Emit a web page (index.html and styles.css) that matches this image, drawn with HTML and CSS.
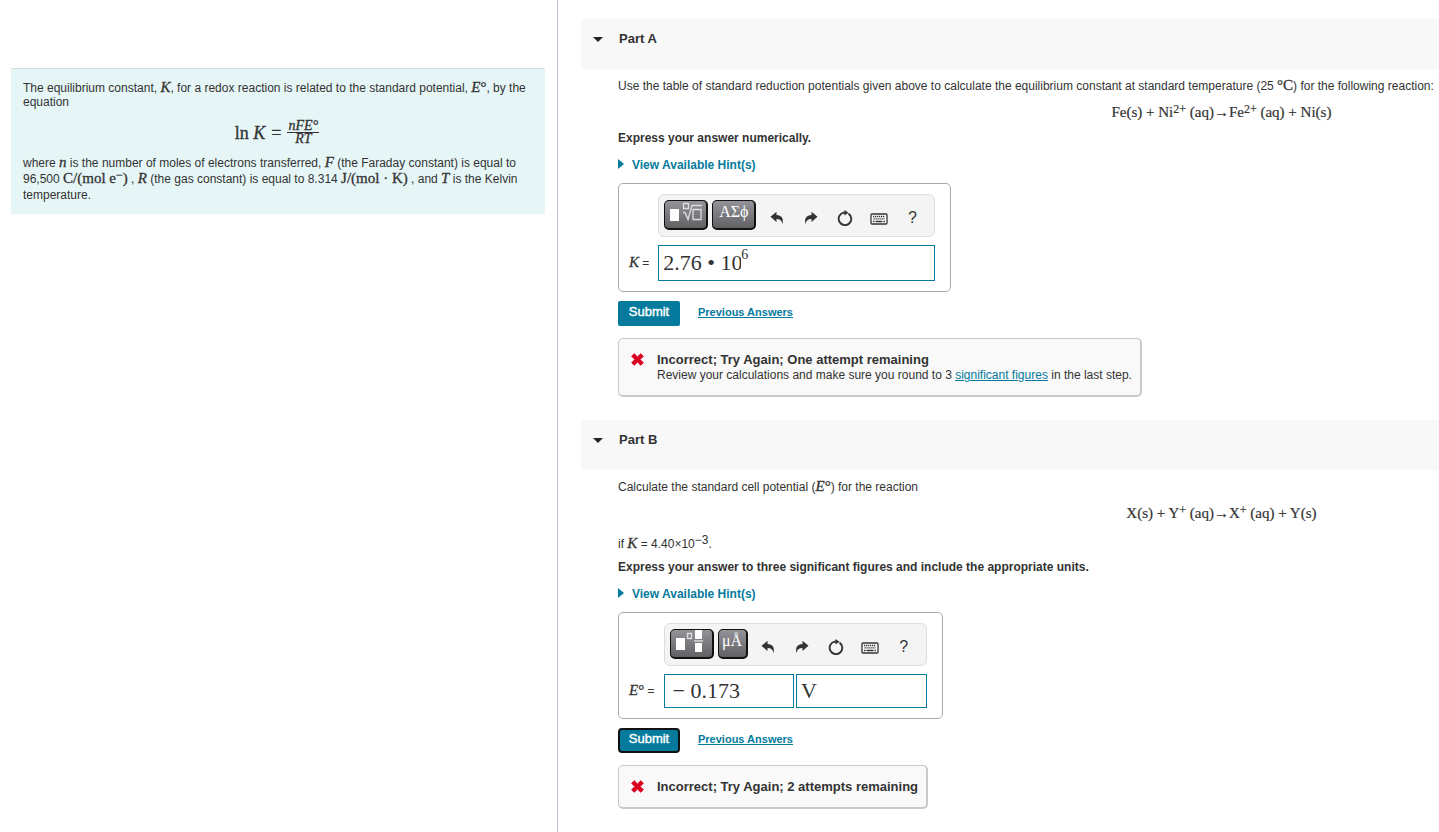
FILE: index.html
```html
<!DOCTYPE html>
<html lang="en">
<head>
<meta charset="utf-8">
<title>Equilibrium constant and cell potential</title>
<link rel="stylesheet" href="styles.css">
</head>
<body>
<svg class="defs" aria-hidden="true">
  <symbol id="undo" viewBox="0 0 16 16"><path d="M1.500 6.800 7.500 1.800v3.100c5 .2 7.600 3.300 5.800 9.300-.3-3.600-2.200-5.200-5.800-5.200v3z"/></symbol>
  <symbol id="redo" viewBox="0 0 16 16"><path d="M14.500 6.800 8.500 1.800v3.100c-5 .2-7.600 3.300-5.800 9.300.3-3.600 2.200-5.200 5.800-5.200v3z"/></symbol>
  <symbol id="reset" viewBox="0 0 16 16"><path d="M11.500 3.600a6.300 6.300 0 1 1-5-.9H9" fill="none" stroke="currentColor" stroke-width="1.900"/><path d="M7.500 0v5.400L11.500 2.700z"/></symbol>
  <symbol id="keyboard" viewBox="0 0 18 12"><rect x="1" y="1" width="16" height="10" rx="1" fill="#fff" stroke="currentColor" stroke-width="1.300"/><path d="M3 3.500h12M3.500 5.800h11" stroke="currentColor" stroke-width="1.300" stroke-dasharray="1.300 .7"/><path d="M3 8.500h1.500M5.500 8.500h7M13.500 8.500H15" stroke="currentColor" stroke-width="1.300"/></symbol>
  <symbol id="cross" viewBox="0 0 14 14"><path d="M3.500.8 7 4.200 10.500.8l2.800 2.700L9.800 7l3.500 3.500-2.800 2.700L7 9.800l-3.500 3.400-2.800-2.700L4.200 7 .7 3.500z" stroke="currentColor" stroke-linejoin="round"/></symbol>
</svg>
<div class="page">
  <aside class="side">
    <section class="intro">
      <p>The equilibrium constant, <i class="math">K</i>, for a redox reaction is related to the standard potential, <i class="math">E</i><span class="math">°</span>, by the equation</p>
      <div class="formula math">
        <span>ln <i>K</i></span><span>=</span>
        <span class="fraction"><i class="numerator">nFE°</i><i>RT</i></span>
      </div>
      <p class="where">where <i class="math">n</i> is the number of moles of electrons transferred, <i class="math">F</i> (the Faraday constant) is equal to 96,500 <span class="math">C/(mol e<sup>−</sup>)</span> , <i class="math">R</i> (the gas constant) is equal to 8.314 <span class="math">J/(mol · K)</span> , and <i class="math">T</i> is the Kelvin temperature.</p>
    </section>
  </aside>
  <main class="main">
    <section class="part">
      <header class="part-head"><span class="caret"></span><h2>Part A</h2></header>
      <div class="part-body">
        <p class="question">Use the table of standard reduction potentials given above to calculate the equilibrium constant at standard temperature (25 <span class="math">°C</span>) for the following reaction:</p>
        <div class="reaction math">Fe(s) + Ni<sup>2+</sup> (aq)→Fe<sup>2+</sup> (aq) + Ni(s)</div>
        <p class="instruct">Express your answer numerically.</p>
        <a class="hint" href="#hint-a"><span class="arrow"></span>View Available Hint(s)</a>
        <form class="answer answer-a">
          <div class="toolbar">
            <button type="button" class="key wide" aria-label="Templates"><svg width="34" height="22" viewBox="0 0 34 22"><path d="M1 8h9v12H1z" fill="#fff"/><path d="M14.500 2.500h5v5h-5zM14 11.500h2l3 7 4-14h10M24 8.500h8v10h-8z" fill="none" stroke="#ddd" stroke-width="1.300"/></svg></button>
            <button type="button" class="key wide">ΑΣϕ</button>
            <button type="button" class="tool" aria-label="Undo"><svg class="icon"><use href="#undo"/></svg></button>
            <button type="button" class="tool" aria-label="Redo"><svg class="icon"><use href="#redo"/></svg></button>
            <button type="button" class="tool" aria-label="Reset"><svg class="icon"><use href="#reset"/></svg></button>
            <button type="button" class="tool" aria-label="Keyboard"><svg class="icon keyboard"><use href="#keyboard"/></svg></button>
            <button type="button" class="tool">?</button>
          </div>
          <label for="k"><i class="math">K</i> =</label>
          <div class="field"><input id="k" class="base" value="2.76 • 10"><input class="exponent" aria-label="Exponent" value="6"></div>
        </form>
        <div class="actions"><button type="button" class="submit">Submit</button><a class="previous" href="#previous-a">Previous Answers</a></div>
        <div class="feedback">
          <svg class="cross"><use href="#cross"/></svg>
          <div><strong>Incorrect; Try Again; One attempt remaining</strong>
          <p>Review your calculations and make sure you round to 3 <a href="#figures">significant figures</a> in the last step.</p></div>
        </div>
      </div>
    </section>
    <section class="part">
      <header class="part-head"><span class="caret"></span><h2>Part B</h2></header>
      <div class="part-body">
        <p class="question">Calculate the standard cell potential (<i class="math">E</i><span class="math">°</span>) for the reaction</p>
        <div class="reaction math">X(s) + Y<sup>+</sup> (aq)→X<sup>+</sup> (aq) + Y(s)</div>
        <p class="condition">if <i class="math">K</i> = 4.40×10<sup>−3</sup>.</p>
        <p class="instruct">Express your answer to three significant figures and include the appropriate units.</p>
        <a class="hint" href="#hint-b"><span class="arrow"></span>View Available Hint(s)</a>
        <form class="answer answer-b">
          <div class="toolbar">
            <button type="button" class="key wide" aria-label="Templates"><svg width="34" height="24" viewBox="0 0 34 24"><path d="M2 9h9v12H2zM21 1h7v9h-7zM21 14h7v9h-7z" fill="#fff"/><path d="M13.500 4.500h4v5h-4zM20 12h9" fill="none" stroke="#ddd" stroke-width="1.300"/></svg></button>
            <button type="button" class="key">μÅ</button>
            <button type="button" class="tool" aria-label="Undo"><svg class="icon"><use href="#undo"/></svg></button>
            <button type="button" class="tool" aria-label="Redo"><svg class="icon"><use href="#redo"/></svg></button>
            <button type="button" class="tool" aria-label="Reset"><svg class="icon"><use href="#reset"/></svg></button>
            <button type="button" class="tool" aria-label="Keyboard"><svg class="icon keyboard"><use href="#keyboard"/></svg></button>
            <button type="button" class="tool">?</button>
          </div>
          <label for="e"><i class="math">E</i><span class="math">°</span> =</label>
          <div class="pair"><input id="e" class="field signed" value="− 0.173"><input class="field" aria-label="Units" value="V"></div>
        </form>
        <div class="actions"><button type="button" class="submit focused">Submit</button><a class="previous" href="#previous-b">Previous Answers</a></div>
        <div class="feedback">
          <svg class="cross"><use href="#cross"/></svg>
          <strong>Incorrect; Try Again; 2 attempts remaining</strong>
        </div>
      </div>
    </section>
  </main>
</div>
</body>
</html>
```
FILE: styles.css
```css
* { box-sizing: border-box; }
body { margin: 0; background: #fff; color: #333; font: 12px/16px "Liberation Sans", Arial, sans-serif; }
p, h2 { margin: 0; }
button, input { font: inherit; color: inherit; margin: 0; }
a { color: #047a9c; }
svg { display: block; fill: currentColor; }
sup { font-size: 12px; line-height: 8px; vertical-align: 4px; }
.defs { position: absolute; width: 0; height: 0; }
.math { font-family: "Liberation Serif", serif; font-size: 15px; line-height: 12px; -webkit-text-stroke: 0.3px currentColor; }

.page { display: grid; grid-template-columns: 558fr 881fr; min-height: 100vh; }
.side { padding: 68px 12px 0 11px; border-right: 1px solid #b8c2d6; }
.intro { padding: 12px 14px 11px 12px; background: #e6f6f7; border-top: 1px solid #d5dcdd; line-height: 14px; }
.formula { display: flex; align-items: center; justify-content: center; gap: 6px; padding: 11px 0 10px; font-size: 18px; line-height: 24px; }
.fraction { display: flex; flex-direction: column; align-items: center; font-size: 14px; line-height: 12px; }
.numerator { padding: 0 1px; border-bottom: 1px solid #333; }
.where { line-height: 16px; }

.main { padding: 19px 0 22px 23px; }
.part + .part { margin-top: 23px; }
.part-head { display: flex; gap: 16px; height: 50px; padding: 11px 12px; background: #f8f8f8; }
.caret { height: 5px; margin-top: 7px; border: 5px solid transparent; border-top-color: #222; border-bottom: 0; }
h2 { font-size: 13px; line-height: 17px; }
.part-body { padding: 9px 0 0 37px; }
.question { white-space: nowrap; }
.reaction { margin-left: 47%; padding: 7px 0; font-size: 15px; line-height: 22px; text-align: center; -webkit-text-stroke: 0.2px currentColor; }
.condition { padding: 5px 0 7px; }
.instruct { font-weight: bold; }
.hint { display: flex; align-items: center; gap: 8px; width: max-content; margin-top: 11px; font-weight: bold; text-decoration: none; }
.arrow { margin-top: -3px; border: 5px solid transparent; border-left: 6px solid #047a9c; border-right: 0; }

.answer { display: grid; align-items: center; gap: 8px 9px; width: max-content; margin-top: 10px; padding: 10px 15px 10px 10px; border: 1px solid #aaa; border-radius: 5px; }
.answer-a { grid-template-columns: auto 277px; }
.answer-b { grid-template-columns: auto 263px; }
.toolbar { grid-column: 2; display: flex; height: 43px; padding: 5px; border: 1px solid #ddd; border-radius: 6px; background: #f4f4f4; }
.key { display: flex; align-items: center; justify-content: center; flex: none; width: 30px; height: 30px; margin-right: 4px; padding: 0 0 6px; border: 1px solid #111; border-width: 1px 2px 2px 1px; border-radius: 5px; background: linear-gradient(#929299, #626265); color: #fff; font: 16px/20px "Liberation Serif", serif; }
.wide { width: 44px; }
.tool { display: flex; align-items: center; justify-content: center; flex: 1; padding: 4px 0 0; border: 0; background: none; font-size: 16px; }
.icon { width: 16px; height: 16px; }
.keyboard { width: 18px; height: 12px; margin-top: 3px; }
.field { display: flex; min-width: 0; height: 36px; padding: 0 4px; border: 1px solid #047a9c; border-radius: 0; background: #fff; font: 22px/32px "Liberation Serif", serif; }
.pair { display: grid; grid-template-columns: 1fr 1fr; gap: 2px; }
.pair .field { height: 34px; }
.pair .signed { padding-left: 8px; }
.base, .exponent { padding: 0; border: 0; background: none; }
.base { width: 78px; }
.exponent { flex: 1; min-width: 0; height: 18px; font-size: 14px; }

.actions { display: flex; align-items: center; gap: 18px; margin-top: 9px; }
.submit { width: 62px; height: 25px; padding: 0 0 4px; border: 0; border-radius: 2px; background: #047a9c; color: #fff; font-size: 13px; -webkit-text-stroke: 0.4px #fff; }
.focused { border: 2px solid #111; border-radius: 4px; }
.previous { padding-bottom: 3px; font-size: 11px; line-height: 14px; font-weight: bold; }
.feedback { display: flex; gap: 13px; width: max-content; margin-top: 12px; padding: 12px 8px 12px 12px; border: 1px solid #c9c9c9; border-width: 1px 2px 2px 1px; border-radius: 5px; background: #f9f9f9; }
.feedback strong { display: block; font-size: 13px; line-height: 17px; }
.feedback p { line-height: 15px; }
.cross { width: 13px; height: 13px; margin-top: 2px; color: #d9001f; }
```
